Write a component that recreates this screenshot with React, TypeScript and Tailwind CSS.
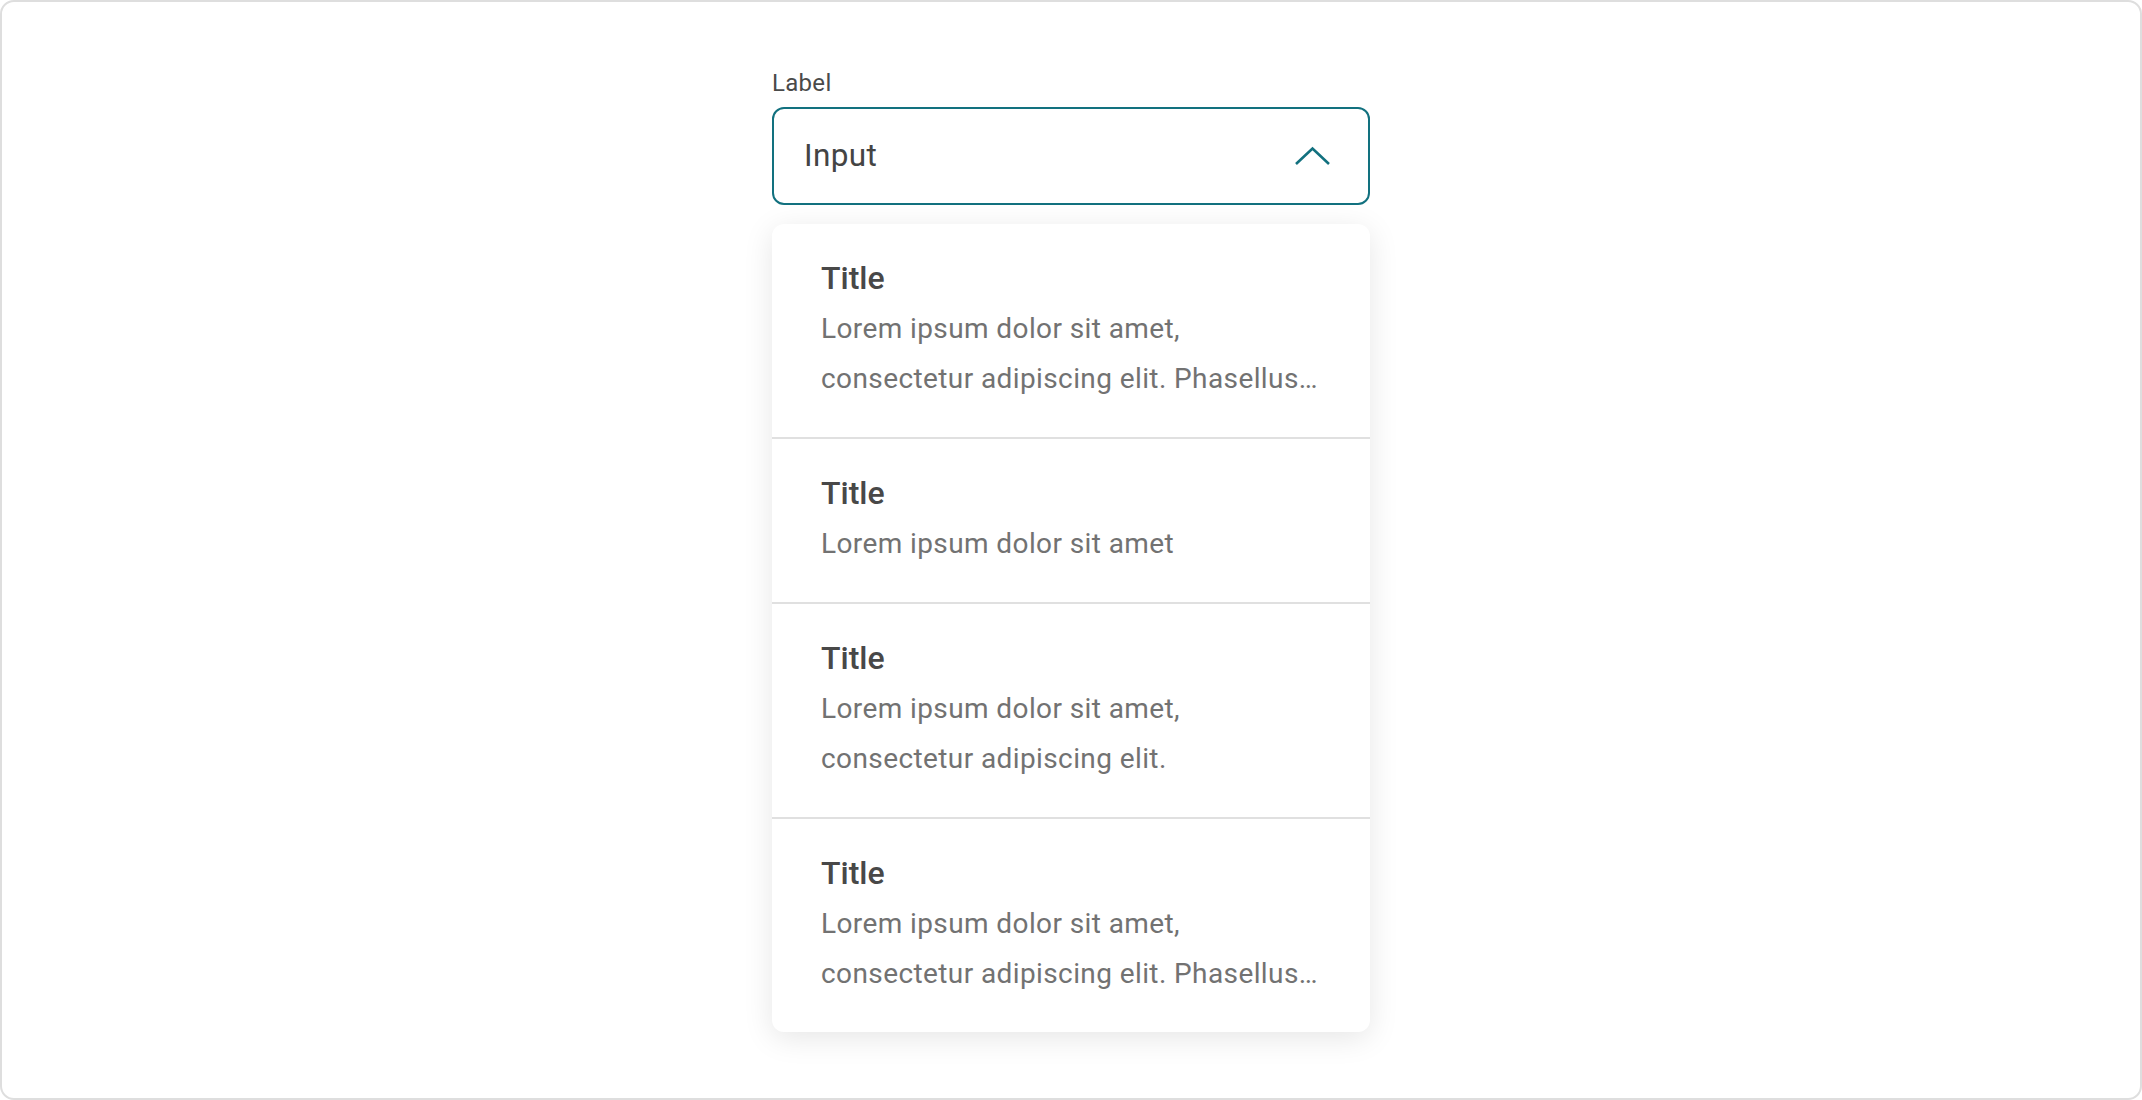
import React from "react";

type Item = { title: string; lines: string[] };

const items: Item[] = [
  {
    title: "Title",
    lines: ["Lorem ipsum dolor sit amet,", "consectetur adipiscing elit. Phasellus…"],
  },
  { title: "Title", lines: ["Lorem ipsum dolor sit amet"] },
  {
    title: "Title",
    lines: ["Lorem ipsum dolor sit amet,", "consectetur adipiscing elit."],
  },
  {
    title: "Title",
    lines: ["Lorem ipsum dolor sit amet,", "consectetur adipiscing elit. Phasellus…"],
  },
];

function ChevronUp() {
  return (
    <svg width="37" height="20" viewBox="0 0 37 20" fill="none">
      <polyline
        points="2,18 18.5,2.5 35,18"
        stroke="#12717f"
        strokeWidth="2.6"
        strokeLinecap="butt"
        strokeLinejoin="miter"
      />
    </svg>
  );
}

export default function App() {
  return (
    <div
      className="w-full h-[1100px] bg-white"
      style={{ fontFamily: "Roboto, 'Noto Sans', sans-serif" }}
    >
      <div className="h-full w-full border-2 border-[#dedede] rounded-[14px] bg-white flex justify-center">
        <div className="w-[598px] pt-[65px] flex flex-col">
          {/* label + field */}
          <label className="text-[24px] leading-[32px] tracking-[0.3px] text-[#4a4a4a]">Label</label>
          <div className="mt-[8px] h-[98px] border-2 border-[#12717f] rounded-[12px] flex items-center justify-between pl-[30px] pr-[37px]">
            <span className="text-[31.5px] leading-[40px] tracking-[0.4px] text-[#444444]">Input</span>
            <ChevronUp />
          </div>

          {/* options */}
          <div className="mt-[19px] bg-white rounded-[12px] shadow-[0_6px_30px_rgba(0,0,0,0.10)] overflow-hidden">
            {items.map((item, i) => (
              <div
                key={i}
                className={`pl-[49px] pr-[40px] pt-[34px] pb-[33px] ${i < items.length - 1 ? "border-b-2 border-[#e0e0e0]" : ""}`}
              >
                <div className="text-[32px] leading-[40px] font-medium text-[#484848]">{item.title}</div>
                <div className="mt-[6px]">
                  {item.lines.map((line, j) => (
                    <div
                      key={j}
                      className="text-[28px] leading-[50px] tracking-[0.4px] text-[#727272] whitespace-nowrap"
                    >
                      {line}
                    </div>
                  ))}
                </div>
              </div>
            ))}
          </div>
        </div>
      </div>
    </div>
  );
}
